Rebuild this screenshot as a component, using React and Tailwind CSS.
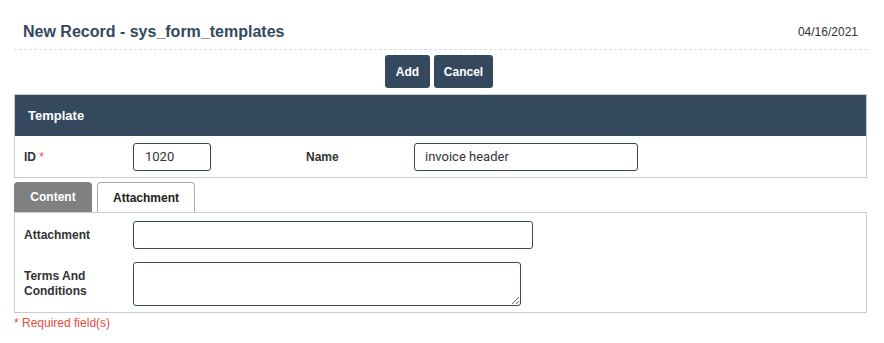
import React from "react";

export default function App() {
  return (
    <div className="w-[884px] h-[343px] bg-white font-['Liberation_Sans',Arial,sans-serif] text-[#333]">
      <div className="pl-[14px] pr-[17px]">
        <div className="h-[50px] pt-[14px] flex items-center justify-between border-b border-dashed border-[#dcdcdc] px-[9px]">
          <div className="text-[16px] font-bold text-[#34495e]">New Record - sys_form_templates</div>
          <div className="text-[12px] text-[#333]">04/16/2021</div>
        </div>
        <div className="mt-[5px] flex justify-center gap-[4px] pr-[3px]">
          <button className="h-[33px] w-[45px] rounded-[3px] bg-[#34495e] text-white text-[12px] font-bold">Add</button>
          <button className="h-[33px] w-[59px] rounded-[3px] bg-[#34495e] text-white text-[12px] font-bold">Cancel</button>
        </div>
        <div className="mt-[6px] border border-[#cccccc]">
          <div className="h-[41px] bg-[#34495e] flex items-center pl-[13px] text-white text-[13px] font-bold">Template</div>
          <div className="h-[41px] flex items-center pl-[9px] text-[12px]">
            <div className="w-[109px] font-bold">ID <span className="text-[#e74c3c] font-normal">*</span></div>
            <input readOnly value="1020" className="w-[78px] h-[28px] border border-[#34495e] rounded-[3px] px-[11px] text-[13px] font-['Roboto',sans-serif] text-[#333] outline-none" />
            <div className="ml-[95px] w-[108px] font-bold">Name</div>
            <input readOnly value="invoice header" className="w-[224px] h-[28px] border border-[#34495e] rounded-[3px] px-[10px] text-[13px] font-['Roboto',sans-serif] text-[#333] outline-none" />
          </div>
        </div>
        <div className="mt-[4px] flex gap-[5px] items-end">
          <div className="w-[78px] h-[30px] bg-[#808080] rounded-t-[4px] flex items-center justify-center text-white text-[12px] font-bold">Content</div>
          <div className="w-[98px] h-[30px] bg-white border border-b-0 border-[#aaaaaa] rounded-t-[4px] flex items-center justify-center text-[12px] font-bold text-[#222]">Attachment</div>
        </div>
        <div className="border border-[#cccccc] pt-[8px] pb-[6px]">
          <div className="flex items-center pl-[9px]">
            <div className="w-[109px] text-[12px] font-bold">Attachment</div>
            <input readOnly value="" className="w-[400px] h-[28px] border border-[#34495e] rounded-[3px] outline-none" />
          </div>
          <div className="mt-[13px] flex items-start pl-[9px]">
            <div className="w-[109px] text-[12px] font-bold leading-[15px] pt-[7px]">Terms And<br />Conditions</div>
            <textarea readOnly className="w-[388px] h-[44px] border border-[#34495e] rounded-[3px] outline-none block" />
          </div>
        </div>
        <div className="mt-[1px] text-[12px] text-[#e74c3c]">* Required field(s)</div>
      </div>
    </div>
  );
}
